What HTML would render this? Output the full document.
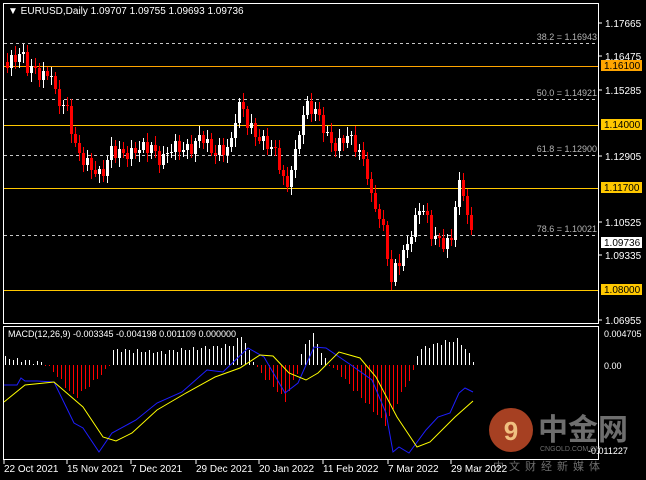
<!DOCTYPE html>
<html><head><meta charset="utf-8"><style>
html,body{margin:0;padding:0;background:#000;}
body{width:646px;height:480px;overflow:hidden;position:relative;font-family:"Liberation Sans","Noto Sans CJK SC",sans-serif;}
svg{position:absolute;left:0;top:0;}
</style></head><body>
<svg id="s" width="646" height="480" viewBox="0 0 646 480" font-family="Liberation Sans, Noto Sans CJK SC, sans-serif" shape-rendering="crispEdges">
<rect width="646" height="480" fill="#000"/>
<rect x="3.5" y="3.5" width="595" height="320" fill="none" stroke="#fff" stroke-width="1"/>
<rect x="3.5" y="326.5" width="595" height="133" fill="none" stroke="#fff" stroke-width="1"/>
<g stroke="#c8c8c8" stroke-dasharray="3,3" stroke-width="1">
<line x1="4" y1="43.5" x2="598" y2="43.5"/><line x1="4" y1="99.5" x2="598" y2="99.5"/>
<line x1="4" y1="155.5" x2="598" y2="155.5"/><line x1="4" y1="235.5" x2="598" y2="235.5"/>
</g>
<g fill="#b4b4b4" font-size="9" text-anchor="end">
<text x="597" y="40">38.2 = 1.16943</text><text x="597" y="96">50.0 = 1.14921</text>
<text x="597" y="152">61.8 = 1.12900</text><text x="597" y="232">78.6 = 1.10021</text>
</g>
<line x1="4" y1="66.5" x2="598" y2="66.5" stroke="#FFA500"/>
<g stroke="#FFC800"><line x1="4" y1="125.5" x2="598" y2="125.5"/><line x1="4" y1="188.5" x2="598" y2="188.5"/><line x1="4" y1="290.5" x2="598" y2="290.5"/></g>
<g id="c"></g>
<text x="8" y="14" fill="#fff" font-size="10">▼ EURUSD,Daily  1.09707 1.09755 1.09693 1.09736</text>
<g fill="#fff" font-size="10">
<text x="605" y="27">1.17665</text><text x="605" y="60">1.16475</text><text x="605" y="94">1.15285</text>
<text x="605" y="160">1.12905</text><text x="605" y="226">1.10525</text><text x="605" y="259">1.09335</text><text x="605" y="324">1.06955</text>
</g>
<g stroke="#fff"><line x1="599" y1="23" x2="602" y2="23"/><line x1="599" y1="56" x2="602" y2="56"/><line x1="599" y1="90" x2="602" y2="90"/><line x1="599" y1="156" x2="602" y2="156"/><line x1="599" y1="222" x2="602" y2="222"/><line x1="599" y1="255" x2="602" y2="255"/><line x1="599" y1="320" x2="602" y2="320"/></g>
<rect x="601" y="60" width="41" height="11" fill="#FFA500"/><text x="604" y="69" font-size="10" fill="#000">1.16100</text>
<rect x="601" y="119" width="41" height="11" fill="#FFC800"/><text x="604" y="128" font-size="10" fill="#000">1.14000</text>
<rect x="601" y="182" width="41" height="11" fill="#FFC800"/><text x="604" y="191" font-size="10" fill="#000">1.11700</text>
<rect x="601" y="237" width="41" height="11" fill="#fff"/><text x="604" y="246" font-size="10" fill="#000">1.09736</text>
<rect x="601" y="284" width="41" height="11" fill="#FFC800"/><text x="604" y="293" font-size="10" fill="#000">1.08000</text>
<g id="h"></g>
<polyline fill="none" stroke="#1e1eff" stroke-width="1" shape-rendering="auto" points="4,385 17,385 21,378 25,381 37,381 54,382 74,423 83,428 99,452 112,433 136,420 157,403 182,392 207,370 223,372 248,348 264,357 285,393 298,383 314,347 326,348 351,365 372,380 386,413 393,452 399,447 409,453 426,430 438,417 450,413 459,393 465,388 473,392"/>
<polyline fill="none" stroke="#ffff00" stroke-width="1" shape-rendering="auto" points="4,402 25,385 54,382 83,407 103,437 116,441 132,433 157,410 186,393 215,377 240,368 260,355 273,356 289,373 306,380 318,373 339,352 360,358 376,377 397,417 417,447 430,442 455,417 473,401"/>
<text x="8" y="337" fill="#fff" font-size="9">MACD(12,26,9) -0.003345 -0.004198 0.001109 0.000000</text>
<g fill="#fff" font-size="9"><text x="604" y="337">0.004705</text><text x="604" y="369">0.00</text></g>
<g shape-rendering="auto">
<circle cx="511" cy="430" r="22" fill="#d0502a" opacity="0.8"/>
<text x="511" y="440" font-size="26" font-weight="bold" fill="#f0c080" text-anchor="middle">9</text>
<text x="538" y="440" font-size="30" font-weight="bold" fill="#6e6e6e">中金网</text>
<text x="540" y="451" font-size="7" fill="#6e6e6e">CNGOLD.COM.CN</text>
<text x="588" y="454" font-size="9" fill="#fff">-0.011227</text>
<text x="493" y="470" font-size="11" fill="#6e6e6e" letter-spacing="5">中文财经新媒体</text>
</g>
<g fill="#fff" font-size="10">
<text x="4" y="472">22 Oct 2021</text><text x="67" y="472">15 Nov 2021</text><text x="131" y="472">7 Dec 2021</text>
<text x="196" y="472">29 Dec 2021</text><text x="259" y="472">20 Jan 2022</text><text x="323" y="472">11 Feb 2022</text>
<text x="388" y="472">7 Mar 2022</text><text x="451" y="472">29 Mar 2022</text>
</g>
<g stroke="#fff"><line x1="4" y1="460" x2="4" y2="464"/><line x1="67" y1="460" x2="67" y2="464"/><line x1="131" y1="460" x2="131" y2="464"/><line x1="196" y1="460" x2="196" y2="464"/><line x1="259" y1="460" x2="259" y2="464"/><line x1="323" y1="460" x2="323" y2="464"/><line x1="388" y1="460" x2="388" y2="464"/><line x1="451" y1="460" x2="451" y2="464"/></g>
</svg>
<script>
(function(){
var k=[[5,62],[15,55],[20,50],[25,70],[40,75],[50,70],[55,100],[65,110],[75,150],[85,160],[100,180],[110,150],[120,150],[130,155],[140,150],[150,145],[160,160],[170,150],[180,150],[190,145],[200,135],[210,155],[220,150],[230,140],[235,110],[240,105],[245,125],[255,135],[265,140],[275,155],[285,195],[290,165],[295,150],[300,115],[305,105],[315,115],[325,135],[335,145],[345,135],[355,150],[365,165],[370,195],[380,220],[385,250],[390,285],[395,265],[405,245],[410,230],[420,205],[430,235],[440,240],[450,240],[455,195],[460,185],[470,235],[473,242]];
function f(x){for(var i=0;i<k.length-1;i++){if(x<=k[i+1][0]){var t=(x-k[i][0])/(k[i+1][0]-k[i][0]);return k[i][1]+t*(k[i+1][1]-k[i][1]);}}return k[k.length-1][1];}
var s='',prev=f(5),n=0;
for(var x=6;x<=472;x+=4){n++;var c=Math.round(f(x)+Math.sin(n*2.3)*6+Math.sin(n*0.7)*3);var o=Math.round(prev);
var hi=Math.round(Math.min(o,c)-3-Math.abs(Math.sin(n*1.7))*6),lo=Math.round(Math.max(o,c)+3+Math.abs(Math.cos(n*1.3))*6);
var col=c>o?'#ff0000':'#ffffff';
s+='<rect x="'+(x+1)+'" y="'+hi+'" width="1" height="'+(lo-hi)+'" fill="'+col+'"/>';
s+='<rect x="'+x+'" y="'+Math.min(o,c)+'" width="3" height="'+Math.max(1,Math.abs(c-o))+'" fill="'+col+'"/>';prev=c;}
document.getElementById('c').innerHTML=s;
var hs=[[4,358],[45,363],[50,368],[75,398],[108,368],[112,350],[160,352],[235,345],[240,333],[252,358],[258,370],[285,400],[298,370],[302,350],[312,333],[326,362],[336,370],[385,424],[413,372],[418,350],[440,343],[458,340],[473,360]];
function g(x){for(var i=0;i<hs.length-1;i++){if(x<=hs[i+1][0]){var t=(x-hs[i][0])/(hs[i+1][0]-hs[i][0]);return hs[i][1]+t*(hs[i+1][1]-hs[i][1]);}}return 365;}
var h='';
for(var x=5;x<=473;x+=4){var y=Math.round(g(x)+Math.sin(x)*2);var col=y<365?'#ffffff':'#ff0000';
var top=Math.min(y,365),ht=Math.max(1,Math.abs(y-365));
h+='<rect x="'+x+'" y="'+top+'" width="1" height="'+ht+'" fill="'+col+'"/>';}
document.getElementById('h').innerHTML=h;
})();
</script>
</body></html>
